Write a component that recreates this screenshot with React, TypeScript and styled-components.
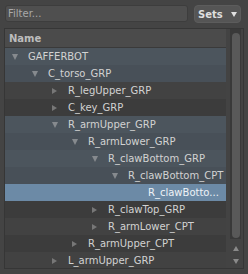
import React from 'react';
import styled, { createGlobalStyle } from 'styled-components';

interface Node {
  label: string;
  level: number;
  caret: 'open' | 'closed' | 'none';
  path?: boolean;
  selected?: boolean;
}

const nodes: Node[] = [
  { label: 'GAFFERBOT', level: 0, caret: 'open', path: true },
  { label: 'C_torso_GRP', level: 1, caret: 'open', path: true },
  { label: 'R_legUpper_GRP', level: 2, caret: 'closed' },
  { label: 'C_key_GRP', level: 2, caret: 'closed' },
  { label: 'R_armUpper_GRP', level: 2, caret: 'open', path: true },
  { label: 'R_armLower_GRP', level: 3, caret: 'open', path: true },
  { label: 'R_clawBottom_GRP', level: 4, caret: 'open', path: true },
  { label: 'R_clawBottom_CPT', level: 5, caret: 'open', path: true },
  { label: 'R_clawBotto...', level: 6, caret: 'none', selected: true },
  { label: 'R_clawTop_GRP', level: 4, caret: 'closed' },
  { label: 'R_armLower_CPT', level: 4, caret: 'closed' },
  { label: 'R_armUpper_CPT', level: 3, caret: 'closed' },
  { label: 'L_armUpper_GRP', level: 2, caret: 'closed' },
];

const GlobalStyle = createGlobalStyle`
  html, body {
    margin: 0;
    padding: 0;
    background: #444444;
  }
  body {
    font-family: "DejaVu Sans", "Liberation Sans", sans-serif;
    font-size: 10px;
  }
`;

const Window = styled.div`
  width: 248px;
  height: 274px;
  padding-top: 5px;
  box-sizing: border-box;
  background: #444444;
  overflow: hidden;
`;

const TopBar = styled.div`
  display: flex;
  align-items: flex-start;
  gap: 6px;
  padding: 0 7px 0 5px;
  height: 18px;
`;

const FilterInput = styled.input`
  flex: 1;
  min-width: 0;
  height: 17px;
  box-sizing: border-box;
  margin: 0;
  padding: 0 0 0 2px;
  border: 1px solid #3d3d3d;
  border-radius: 3px;
  background: #4f4f4f;
  color: #d0d0d0;
  font-family: inherit;
  font-size: 10px;
  outline: none;

  &::placeholder {
    color: #a9a9a9;
  }
`;

const SetsButton = styled.button`
  width: 47px;
  height: 18px;
  box-sizing: border-box;
  margin: 0;
  padding: 0 0 0 3px;
  display: flex;
  align-items: center;
  gap: 8px;
  border: 1px solid #5c5c5c;
  border-radius: 4px;
  background: #555555;
  color: #dedede;
  font-family: inherit;
  font-size: 10px;
  font-weight: bold;
`;

const DownCaret = styled.span<{ $color: string }>`
  width: 0;
  height: 0;
  border-left: 3px solid transparent;
  border-right: 3px solid transparent;
  border-top: 5px solid ${({ $color }) => $color};
`;

const Panel = styled.div`
  margin: 5px 4px 0 4px;
  height: 241px;
  box-sizing: border-box;
  border: 1px solid #363636;
  display: flex;
  background: #3f3f3f;
`;

const Tree = styled.div`
  width: 221px;
  display: flex;
  flex-direction: column;
  overflow: hidden;
`;

const Header = styled.div`
  height: 19px;
  box-sizing: border-box;
  padding: 2px 0 0 4px;
  line-height: 16px;
  background: #4b4b4b;
  border-bottom: 1px solid #3a3a3a;
  color: #bdbdbd;
  font-weight: bold;
  flex-shrink: 0;
`;

const Row = styled.div<{ $level: number; $tone: 'path' | 'plain' | 'selected'; $even: boolean }>`
  height: 17px;
  flex-shrink: 0;
  display: flex;
  align-items: center;
  padding-left: ${({ $level }) => 7 + $level * 20}px;
  line-height: 17px;
  white-space: nowrap;
  color: ${({ $tone }) => ($tone === 'selected' ? '#eef2f6' : '#d2d2d2')};
  background: ${({ $tone, $even }) =>
    $tone === 'selected'
      ? '#6c8aa6'
      : $tone === 'path'
      ? $even ? '#4c555d' : '#485058'
      : $even ? '#424242' : '#3c3c3c'};
`;

const CaretSlot = styled.span`
  width: 16px;
  height: 17px;
  flex-shrink: 0;
  display: flex;
  align-items: center;
`;

const RightCaret = styled.span`
  width: 0;
  height: 0;
  border-top: 3.5px solid transparent;
  border-bottom: 3.5px solid transparent;
  border-left: 5px solid #777777;
`;

const OpenCaret = styled.span`
  width: 0;
  height: 0;
  border-left: 3.5px solid transparent;
  border-right: 3.5px solid transparent;
  border-top: 6px solid #868a8e;
`;

const ScrollColumn = styled.div`
  width: 17px;
  display: flex;
  flex-direction: column;
  align-items: center;
  padding-left: 2px;
  box-sizing: border-box;
  background: #434343;
`;

const Groove = styled.div`
  width: 11px;
  height: 210px;
  box-sizing: border-box;
  padding: 4px 1.5px 0 1.5px;
  background: #393939;
`;

const Handle = styled.div`
  height: 205px;
  border-radius: 4px;
  background: #595959;
`;

const ArrowButton = styled.div<{ $top?: number }>`
  height: 13px;
  margin-top: ${({ $top }) => $top ?? 0}px;
  display: flex;
  align-items: center;
  justify-content: center;
`;

const UpCaret = styled.span`
  width: 0;
  height: 0;
  border-left: 3.5px solid transparent;
  border-right: 3.5px solid transparent;
  border-bottom: 5px solid #8a8a8a;
`;

export default function App() {
  return (
    <>
      <GlobalStyle />
      <Window>
        <TopBar>
          <FilterInput placeholder="Filter..." />
          <SetsButton>
            Sets
            <DownCaret $color="#e0e0e0" />
          </SetsButton>
        </TopBar>
        <Panel>
          <Tree>
            <Header>Name</Header>
            {nodes.map((node, i) => (
              <Row
                key={node.label}
                $level={node.level}
                $even={i % 2 === 0}
                $tone={node.selected ? 'selected' : node.path ? 'path' : 'plain'}
              >
                <CaretSlot>
                  {node.caret === 'open' && <OpenCaret />}
                  {node.caret === 'closed' && <RightCaret />}
                </CaretSlot>
                {node.label}
              </Row>
            ))}
          </Tree>
          <ScrollColumn>
            <Groove>
              <Handle />
            </Groove>
            <ArrowButton $top={3}>
              <UpCaret />
            </ArrowButton>
            <ArrowButton>
              <DownCaret $color="#8a8a8a" />
            </ArrowButton>
          </ScrollColumn>
        </Panel>
      </Window>
    </>
  );
}
